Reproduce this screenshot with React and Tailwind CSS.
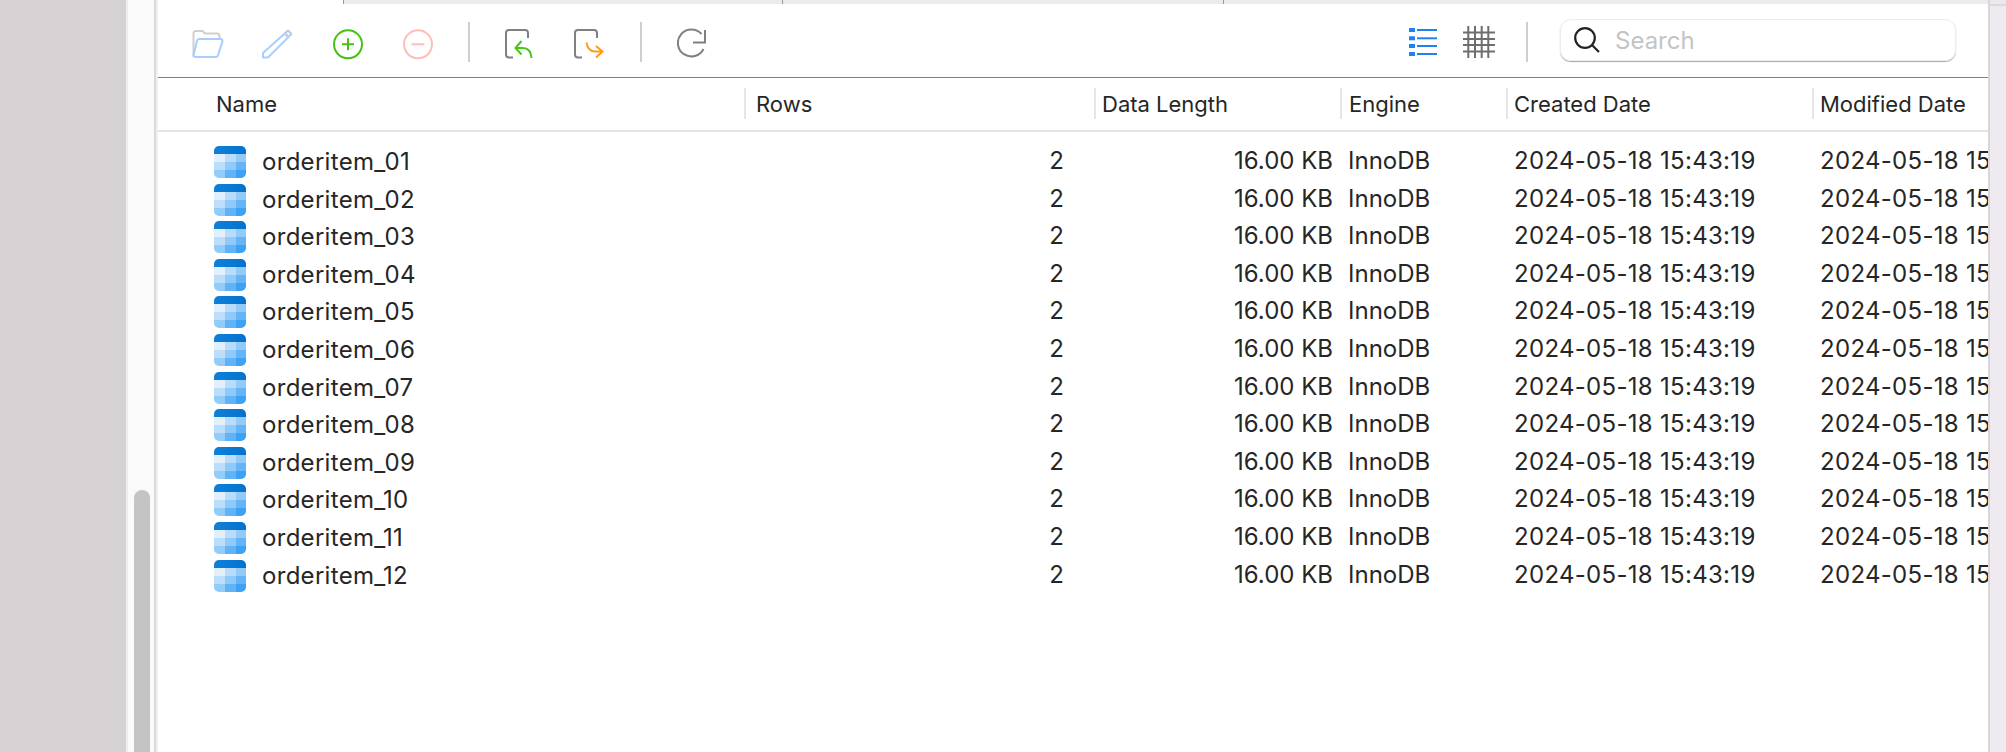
import React from "react";

const names = ["01", "02", "03", "04", "05", "06", "07", "08", "09", "10", "11", "12"];
const columns = "grid-cols-[587px_350px_246px_166px_306px_175px]";

const TableIcon = () => (
  <svg width="32" height="32" viewBox="0 0 32 32" className="shrink-0 mt-[2px]">
    <defs>
      <clipPath id="tableClip">
        <rect width="32" height="32" rx="5" />
      </clipPath>
      <linearGradient id="tableTop" x1="0" y1="0" x2="1" y2="0">
        <stop offset="0" stopColor="#0f80da" />
        <stop offset="1" stopColor="#0472cc" />
      </linearGradient>
    </defs>
    <g clipPath="url(#tableClip)">
      <rect width="32" height="8" fill="url(#tableTop)" />
      <rect y="8" width="11" height="8" fill="#e2f0fd" />
      <rect x="11" y="8" width="11" height="8" fill="#b9dcfb" />
      <rect x="22" y="8" width="10" height="8" fill="#92caf8" />
      <rect y="16" width="11" height="8" fill="#bbdefc" />
      <rect x="11" y="16" width="11" height="8" fill="#8fcaf8" />
      <rect x="22" y="16" width="10" height="8" fill="#64b4f6" />
      <rect y="24" width="11" height="8" fill="#92ccf9" />
      <rect x="11" y="24" width="11" height="8" fill="#62b3f5" />
      <rect x="22" y="24" width="10" height="8" fill="#3da2f3" />
    </g>
  </svg>
);

const Separator = ({ className }) => <div className={`w-[2px] h-10 bg-[#cfcfcf] shrink-0 ${className}`}></div>;

const Toolbar = () => (
  <div className="h-[74px] pt-[3px] flex items-center border-b border-[#808080]">
    <svg width="32" height="40" viewBox="0 0 32 40" fill="none" strokeWidth="2" className="ml-[34px] shrink-0">
      <path d="M1.500 35V11a2 2 0 0 1 2-2h7l2.500 2.500h12a2.500 2.500 0 0 1 2.500 2.500v2.500" stroke="#cfcfcf" />
      <path d="M7 17h21.500a2 2 0 0 1 1.900 2.600l-4.500 14a2 2 0 0 1-1.900 1.400H3a2 2 0 0 1-1.500-2l3.600-14.500A2 2 0 0 1 7 17z" stroke="#a6cfff" fill="#fff" />
    </svg>
    <svg width="30" height="40" viewBox="0 0 30 40" fill="none" strokeWidth="2" className="ml-[38px] shrink-0">
      <path d="M1 35.500h5L29.500 12 26 8.500 1 31z" stroke="#a6cfff" strokeLinejoin="round" />
      <path d="M22 12.500l4 4 2-2-4-4z" fill="#cfcfcf" />
    </svg>
    <svg width="30" height="40" viewBox="0 0 30 40" fill="none" strokeWidth="2" stroke="#43c30f" className="ml-[41px] shrink-0">
      <circle cx="15" cy="22.300" r="14" />
      <path d="M9 22.300h12M15 16.300v12" />
    </svg>
    <svg width="30" height="40" viewBox="0 0 30 40" fill="none" strokeWidth="2" stroke="#ffbdb8" className="ml-[40px] shrink-0">
      <circle cx="15" cy="22.300" r="14" />
      <path d="M8.500 22.300h13" />
    </svg>
    <Separator className="ml-[35px]" />
    <svg width="29" height="40" viewBox="0 0 29 40" fill="none" strokeWidth="2" className="ml-[35px] shrink-0">
      <path d="M8 35.500H4a3 3 0 0 1-3-3V11a3 3 0 0 1 3-3h16a3 3 0 0 1 3 3v5" stroke="#808080" />
      <path d="M16.500 19L10.500 26l6 6.500M11 26h7c5 0 8 4 8.500 10" stroke="#44c914" />
    </svg>
    <svg width="30" height="40" viewBox="0 0 30 40" fill="none" strokeWidth="2" className="ml-[40px] shrink-0">
      <path d="M8 35.500H4a3 3 0 0 1-3-3V11a3 3 0 0 1 3-3h16a3 3 0 0 1 3 3v5" stroke="#808080" />
      <path d="M12.500 20.500c.5 6 4.500 9 8.500 9h7.500M22 24l6.500 5.500L22 35.500" stroke="#ff9a14" />
    </svg>
    <Separator className="ml-[36px]" />
    <svg width="30" height="40" viewBox="0 0 30 40" fill="none" strokeWidth="2" stroke="#808080" className="ml-[35px] shrink-0">
      <path d="M24.500 12A13.500 13.500 0 1 0 26.500 27" />
      <path d="M28 8v12.500H16" />
    </svg>
    <svg width="29" height="40" viewBox="0 0 29 40" fill="#1e82f5" className="ml-[702px] shrink-0">
      <rect y="6" width="6" height="4" />
      <rect y="14.300" width="6" height="4" />
      <rect y="22" width="6" height="4" />
      <rect y="30" width="6" height="4" />
      <rect x="8" y="7" width="20" height="2" />
      <rect x="8" y="15.300" width="20" height="2" />
      <rect x="8" y="23" width="20" height="2" />
      <rect x="8" y="31" width="20" height="2" />
    </svg>
    <svg width="32" height="40" viewBox="0 0 32 40" fill="none" strokeWidth="2" stroke="#6e6e6e" className="ml-[25px] shrink-0">
      <path d="M5.300 4v32M12 4v32M18.700 4v32M25.300 4v32M0 10.500h32M0 17h32M0 23h32M0 29.500h32" />
    </svg>
    <Separator className="ml-[31px]" />
    <div className="ml-[32px] -mt-[4px] w-[396px] h-[42px] shrink-0 flex items-center rounded-[11px] border border-[#ececec] shadow-[0_1px_1px_rgba(0,0,0,0.35)]">
      <svg width="26" height="26" viewBox="0 0 26 26" fill="none" stroke="#222" strokeWidth="2.200" className="ml-[13px] shrink-0">
        <circle cx="11" cy="11" r="9.800" />
        <path d="M18 18l7 7" />
      </svg>
      <span className="ml-[15px] mt-[1px] text-[24px] text-[#c4c4c4]">Search</span>
    </div>
  </div>
);

const HeadCell = ({ children, first, className = "pl-[7px]" }) => (
  <div className={`h-[31px] pt-[2px] flex items-center ${first ? "pl-[58px]" : `-ml-px border-l-2 border-[#e6e6e6] ${className}`}`}>
    {children}
  </div>
);

const App = () => {
  return (
    <div className="w-screen h-screen overflow-hidden flex bg-white font-['Inter',sans-serif] text-[#262626]">
      <div className="w-[126px] shrink-0 bg-[#d7d3d4]"></div>
      <div className="w-[28px] shrink-0 bg-[#fafafa] border-l-2 border-[#eeeeee] pl-[6px] pt-[490px] flex">
        <div className="w-4 bg-[#c4c4c4] rounded-t-lg"></div>
      </div>
      <div className="w-[4px] shrink-0 border-l-2 border-[#dcd8d8] bg-[#efefef]"></div>

      <div className="w-[1830px] shrink-0 overflow-hidden">
        <div className="h-[4px] flex bg-[#ebebeb]">
          <div className="w-[186px] bg-white border-r border-[#999999]"></div>
          <div className="w-[439px] border-r border-[#999999]"></div>
          <div className="w-[441px] border-r border-[#999999]"></div>
        </div>
        <Toolbar />

        <div className={`grid ${columns} h-[54px] pt-[10px] border-b-2 border-[#e4e4e4] text-[22px]`}>
          <HeadCell first>Name</HeadCell>
          <HeadCell className="pl-[10px]">Rows</HeadCell>
          <HeadCell className="pl-[6px]">Data Length</HeadCell>
          <HeadCell>Engine</HeadCell>
          <HeadCell className="pl-[6px]">Created Date</HeadCell>
          <HeadCell className="pl-[6px]">Modified Date</HeadCell>
        </div>

        <div className="pt-[10px] text-[24px]">
          {names.map((n) => (
            <div key={n} className={`grid ${columns} h-[37.6px] items-center whitespace-nowrap`}>
              <div className="pl-[56px] flex items-center gap-[16px] tracking-[0.3px]">
                <TableIcon />
                <span className="mt-[2px]">orderitem_{n}</span>
              </div>
              <div className="text-right pr-[31px]">2</div>
              <div className="text-right pr-[8px]">16.00 KB</div>
              <div className="pl-[7px]">InnoDB</div>
              <div className="pl-[7px] tracking-[0.3px]">2024-05-18 15:43:19</div>
              <div className="pl-[7px] tracking-[0.3px] overflow-hidden">2024-05-18 15:43:19</div>
            </div>
          ))}
        </div>
      </div>

      <div className="flex-1 border-l-2 border-[#d9d5d9] bg-[#efeaef]">
        <div className="h-[6px] border-b-2 border-[#dcd8dc] bg-[#ece8ec]"></div>
      </div>
    </div>
  );
};

export default App;
